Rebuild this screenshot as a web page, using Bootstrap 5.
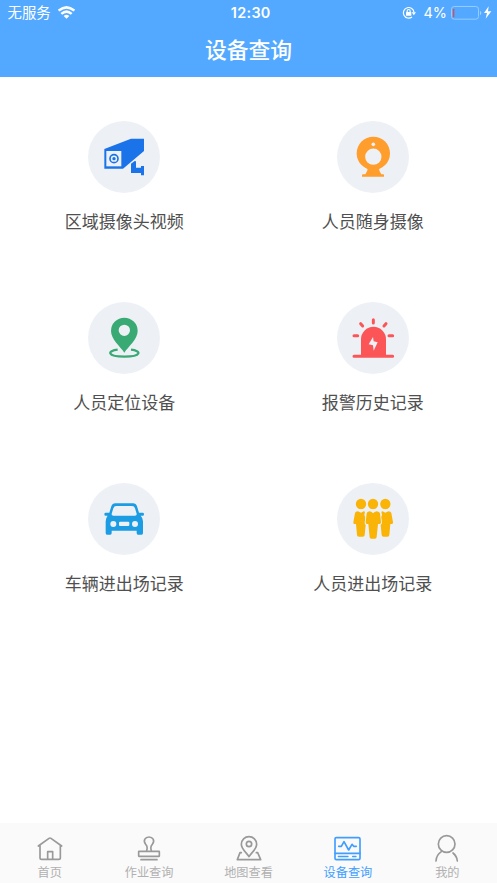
<!DOCTYPE html>
<html lang="zh-CN">
<head>
<meta charset="utf-8">
<meta name="viewport" content="width=device-width, initial-scale=1">
<title>设备查询</title>
<link href="https://cdn.jsdelivr.net/npm/bootstrap@5.3.0/dist/css/bootstrap.min.css" rel="stylesheet">
<style>
body{font-family:Inter,"Noto Sans CJK SC",sans-serif;color:#505050;background:#fff}
.app-head{background:#53a9ff;height:77.4px}
.status{height:25px;padding:0 5px 0 7.5px;font-size:14.4px;line-height:25px}
.status-side{flex:1 1 0}
.clock{font-size:14.4px;font-weight:600;letter-spacing:.3px;padding-left:2px}
.wifi{margin-left:7px}
.app-title{font-size:21.8px;line-height:50px;font-weight:500}
.tile{height:181px;padding-top:44px}
.disc{width:72px;height:72px;background:#edf1f6}
.tile-label{font-size:17px;line-height:24px;margin-top:16.600px;color:#505050}
.tabs{height:60px;background:#fafafa;color:#999}
.tab{padding-top:11px;color:#b0b0b0}
.tab svg{color:#999}
.tab-label{font-size:12.2px;line-height:18px;margin-top:2px}
.tab.on,.tab.on svg{color:#409eff}
svg{display:block;flex:none}
</style>
<script src="https://cdn.jsdelivr.net/npm/bootstrap@5.3.0/dist/js/bootstrap.bundle.min.js"></script>
</head>
<body>
<div class="d-flex flex-column vh-100 overflow-hidden">
<header class="app-head text-white flex-shrink-0">
  <div class="status d-flex align-items-center">
    <div class="status-side d-flex align-items-center">
      <span>无服务</span>
      <svg class="wifi" width="17" height="13" viewBox="0 0 51 39" fill="none" stroke="#fff" stroke-width="7.500"><path d="M2 14Q25.500-6 49 14"/><path d="M10 23.500Q25.500 10 41 23.500"/><path d="M17 30Q25.500 22 34 30L25.500 38z" fill="#fff" stroke="none"/></svg>
    </div>
    <div class="clock">12:30</div>
    <div class="status-side d-flex align-items-center justify-content-end">
      <svg width="14" height="14" viewBox="0 0 42 42" fill="none" stroke="#fff" stroke-width="3.500"><path d="M30 33A16 16 0 1 1 36 19"/><path d="M29 19h13l-6.500 9z" fill="#fff" stroke="none"/><rect x="12" y="18" width="16" height="11" rx="1.500" fill="#fff" stroke="none"/><path d="M15.500 19v-4a4.500 4.500 0 0 1 9 0v4"/></svg>
      <span class="ms-2">4%</span>
      <svg class="ms-1" width="32" height="14" viewBox="0 0 96 42" fill="none"><rect x="1.500" y="1.500" width="81" height="38" rx="8" stroke="#98cbff" stroke-width="3"/><rect x="6" y="8" width="4" height="26" rx="2" fill="#e04b52"/><path d="M87 14q8 7 0 14z" fill="#a6d2ff"/></svg>
      <svg width="9" height="13" viewBox="0 0 27 39" fill="#fff"><path d="M17 1L3 21h9L8 38 25 16H15z"/></svg>
    </div>
  </div>
  <h1 class="app-title text-center mb-0">设备查询</h1>
</header>
<main class="flex-grow-1">
  <div class="row g-0">
    <div class="col-6 tile d-flex flex-column align-items-center">
      <div class="disc rounded-circle"><svg width="72" height="72" viewBox="12 10 216 216"><path fill="#1a73e8" d="M61 94L141 63h39v37l-63 53H61zM141 138l11-8q4-1 4 3v17h15v-5h9v28h-9v-7h-30z"/><path fill="#edf1f6" d="M67 100h45v46H67z"/><circle cx="90" cy="123" r="12" fill="none" stroke="#1a73e8" stroke-width="5"/><circle cx="90" cy="123" r="5" fill="#1a73e8"/></svg></div>
      <div class="tile-label">区域摄像头视频</div>
    </div>
    <div class="col-6 tile d-flex flex-column align-items-center">
      <div class="disc rounded-circle"><svg width="72" height="72" viewBox="12 10 216 216"><circle cx="121" cy="107" r="50" fill="#ff9d2d"/><path fill="#ff9d2d" d="M105 149h32q1 12 8 21h6q2 0 2 3v4H87v-4q0-3 3-3h7q7-9 8-21z"/><circle cx="121" cy="117" r="24.500" fill="#edf1f6"/><circle cx="121" cy="80" r="5.500" fill="#edf1f6"/></svg></div>
      <div class="tile-label">人员随身摄像</div>
    </div>
    <div class="col-6 tile d-flex flex-column align-items-center">
      <div class="disc rounded-circle"><svg width="72" height="72" viewBox="12 10 216 216"><path fill="#3aaa75" fill-rule="evenodd" d="M121 162C109 144 81 122 81 97a40 40 0 0 1 80 0c0 25-28 47-40 65zM121 78a17 17 0 1 0 0 34a17 17 0 1 0 0-34z"/><path d="M101 153C69 156 68 174 121 174s52-18 20-21" fill="none" stroke="#3aaa75" stroke-width="6.500"/></svg></div>
      <div class="tile-label">人员定位设备</div>
    </div>
    <div class="col-6 tile d-flex flex-column align-items-center">
      <div class="disc rounded-circle"><svg width="72" height="72" viewBox="12 10 216 216"><path fill="#fb5558" d="M84 170v-48a37 37 0 0 1 75 0v48z"/><path d="M63 173H179M121 63v10M83 75l6 7M159 75l-6 7M63 111h11M168 111h11" stroke="#fb5558" stroke-width="9" stroke-linecap="round"/><path fill="#edf1f6" d="M120 115l-13 22 13 3 2 16 12-25-12-3z"/></svg></div>
      <div class="tile-label">报警历史记录</div>
    </div>
    <div class="col-6 tile d-flex flex-column align-items-center">
      <div class="disc rounded-circle"><svg width="72" height="72" viewBox="12 10 216 216"><path fill="#1b9ce3" d="M94 71h53q9 0 12 9l6 19h12q3 0 3 4.500t-4 4.500h-6q7 7 7 17v35q0 5-4 5h-11q-4 0-4-5v-7H83v7q0 5-4 5H69q-4 0-4-5v-35q0-10 6-17h-6q-4 0-4-4.500t3-4.500h12l6-19q3-9 12-9z"/><path fill="#edf1f6" d="M97 79h47q7 0 9 7l5 16q1 6-5 6H88q-6 0-5-6l5-16q2-7 9-7z"/><circle cx="88" cy="133" r="9" fill="#edf1f6"/><circle cx="153" cy="133" r="9" fill="#edf1f6"/><rect x="105" y="126" width="31" height="13" rx="3" fill="#edf1f6"/></svg></div>
      <div class="tile-label">车辆进出场记录</div>
    </div>
    <div class="col-6 tile d-flex flex-column align-items-center">
      <div class="disc rounded-circle"><svg width="72" height="72" viewBox="12 10 216 216" fill="#f9b407"><circle cx="84" cy="73" r="15.500"/><circle cx="157" cy="73" r="15.500"/><path id="side" d="M75 95l9 4 8-4 4 1q-4 9 1 17l-2 18 3 5-3 30q0 5-6 5H78q-6 0-6-5l-3-33h-5q-4 0-3-5l5-28q1-4 9-5z"/><use href="#side" transform="translate(241 0) scale(-1 1)"/><circle cx="120" cy="73" r="15.500"/><path stroke="#edf1f6" stroke-width="5" paint-order="stroke" d="M110 95l6 2 4 4 5-4 6-2q9 1 10 6l3 27q0 5-4 5h-5l-4 39q-1 5-5 5h-11q-5 0-5-5l-4-39h-4q-4 0-4-5l3-27q1-5 9-6z"/></svg></div>
      <div class="tile-label">人员进出场记录</div>
    </div>
  </div>
</main>
<nav class="tabs row g-0 flex-shrink-0">
  <div class="tab col d-flex flex-column align-items-center">
    <svg width="30" height="28" viewBox="104 57 90 84" fill="none" stroke="currentColor" stroke-width="5" stroke-linecap="round" stroke-linejoin="round"><path d="M114 93l32-23q3-2 6 0l32 23M119 90v38q0 5 5 5h51q5 0 5-5V90M142 133v-23h15v23"/></svg>
    <div class="tab-label">首页</div>
  </div>
  <div class="tab col d-flex flex-column align-items-center">
    <svg width="30" height="28" viewBox="402 57 90 84" fill="none" stroke="currentColor" stroke-width="5" stroke-linecap="round" stroke-linejoin="round"><path d="M440 107q4-12-3-19c-9-12-1-22 10-22s19 10 10 22q-7 7-3 19M423 134h48"/><rect x="416" y="109" width="62" height="15" rx="1"/></svg>
    <div class="tab-label">作业查询</div>
  </div>
  <div class="tab col d-flex flex-column align-items-center">
    <svg width="30" height="28" viewBox="100 57 90 84" fill="none" stroke="currentColor" stroke-width="5" stroke-linecap="round" stroke-linejoin="round"><path d="M145 125c-7-12-23-22-23-37a23 23 0 0 1 46 0c0 15-16 25-23 37zM122 113h-4l-8 21h70l-9-21h-4"/><circle cx="145" cy="87" r="8"/></svg>
    <div class="tab-label">地图查看</div>
  </div>
  <div class="tab on col d-flex flex-column align-items-center">
    <svg width="30" height="28" viewBox="39 57 90 84" fill="none" stroke="currentColor" stroke-width="5" stroke-linecap="round" stroke-linejoin="round"><rect x="45" y="68" width="75" height="66" rx="4"/><path d="M45 115h75M56 94h8l8-14 14 25 10-17 5 6h8" /><path d="M55 124.500h29M98 124.500h10" stroke-width="4"/></svg>
    <div class="tab-label">设备查询</div>
  </div>
  <div class="tab col d-flex flex-column align-items-center">
    <svg width="30" height="28" viewBox="337 57 90 84" fill="none" stroke="currentColor" stroke-width="5" stroke-linecap="round"><circle cx="381" cy="87" r="25"/><path d="M365 110q-15 10-16 28M400 114q12 10 13 24"/></svg>
    <div class="tab-label">我的</div>
  </div>
</nav>
</div>
</body>
</html>
